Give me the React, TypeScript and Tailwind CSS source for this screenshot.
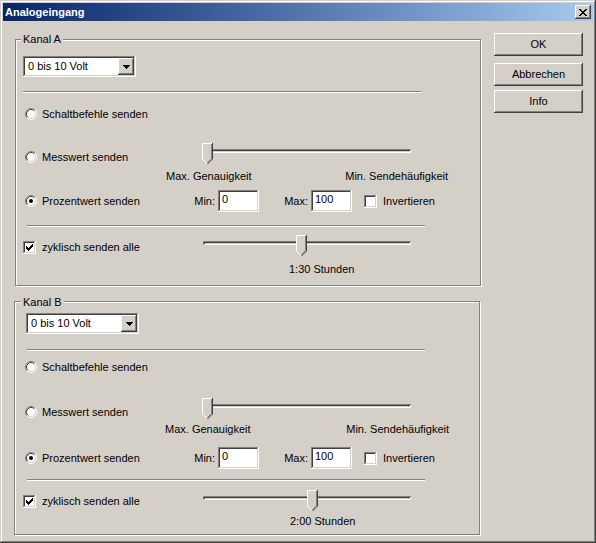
import React from "react";

const raised =
  "shadow-[inset_-1px_-1px_#404040,inset_1px_1px_#fff,inset_-2px_-2px_#808080,inset_2px_2px_#d4d0c8]";
const sunken =
  "shadow-[inset_-1px_-1px_#fff,inset_1px_1px_#808080,inset_-2px_-2px_#d4d0c8,inset_2px_2px_#404040]";

const Radio = ({ checked }: { checked?: boolean }) => (
  <svg width="12" height="12" viewBox="0 0 12 12" className="shrink-0">
    <circle cx="6" cy="6" r="5" fill="#fff" />
    <path d="M9.89 2.11A5.5 5.5 0 0 0 2.11 9.89" fill="none" stroke="#808080" />
    <path d="M2.11 9.89A5.5 5.5 0 0 0 9.89 2.11" fill="none" stroke="#fff" />
    <path d="M9.18 2.82A4.5 4.5 0 0 0 2.82 9.18" fill="none" stroke="#404040" />
    <path d="M2.82 9.18A4.5 4.5 0 0 0 9.18 2.82" fill="none" stroke="#d4d0c8" />
    {checked && <circle cx="6" cy="6" r="2" fill="#000" />}
  </svg>
);

const RadioRow = ({ label, checked }: { label: string; checked?: boolean }) => (
  <div className="flex items-center h-[16px] gap-[5px]">
    <Radio checked={checked} />
    <span>{label}</span>
  </div>
);

const Check = ({ checked }: { checked?: boolean }) => (
  <span className={`flex items-center justify-center w-[13px] h-[13px] bg-white shrink-0 ${sunken}`}>
    {checked && (
      <svg width="7" height="7" viewBox="0 0 7 7" shapeRendering="crispEdges">
        <path
          d="M6 0h1v1H6z M5 1h2v1H5z M0 2h1v1H0z M4 2h3v1H4z M0 3h2v1H0z M3 3h3v1H3z M0 4h5v1H0z M1 5h3v1H1z M2 6h1v1H2z"
          fill="#000"
        />
      </svg>
    )}
  </span>
);

const Separator = ({ className }: { className: string }) => (
  <div className={`w-[398px] h-[2px] border-t border-b border-t-[#808080] border-b-white ${className}`} />
);

const Combo = () => (
  <div className={`flex w-[113px] h-[21px] bg-white p-[2px] ${sunken}`}>
    <div className="flex-1 pl-[3px] flex items-center">0 bis 10 Volt</div>
    <div className={`w-[16px] h-[17px] bg-[#d4d0c8] flex items-center justify-center ${raised}`}>
      <svg width="7" height="4" viewBox="0 0 7 4" shapeRendering="crispEdges">
        <path d="M0 0h7v1H0z M1 1h5v1H1z M2 2h3v1H2z M3 3h1v1H3z" fill="#000" />
      </svg>
    </div>
  </div>
);

const Edit = ({ value }: { value: string }) => (
  <div className={`w-[41px] h-[22px] bg-white pl-[4px] pt-[3px] ${sunken}`}>{value}</div>
);

const Thumb = () => (
  <svg width="11" height="21" viewBox="0 0 11 21">
    <path d="M0 0H11V16L5.5 21L0 16Z" fill="#d4d0c8" />
    <path d="M0.5 16V0.5H10" fill="none" stroke="#fff" />
    <path d="M0.5 16L5 20.5" fill="none" stroke="#fff" />
    <path d="M10.5 0V16L5.5 21" fill="none" stroke="#404040" />
    <path d="M9.5 1V15.6L5.5 19.6" fill="none" stroke="#808080" />
  </svg>
);

const Slider = ({ thumb }: { thumb: string }) => (
  <div className="relative w-[210px] h-[21px]">
    <div className="absolute left-[1px] top-[6px] w-[208px] h-[4px] shadow-[inset_1px_1px_#808080,inset_-1px_-1px_#fff,inset_2px_2px_#404040,inset_-2px_-2px_#d4d0c8]" />
    <div className={`absolute top-0 ${thumb}`}>
      <Thumb />
    </div>
  </div>
);

type ChannelProps = {
  name: string;
  box: string;
  legend: string;
  combo: string;
  sep1: string;
  schalt: string;
  mess: string;
  labels: string;
  prozent: string;
  sep2: string;
  zyklisch: string;
  zyklischLabel: string;
  thumb: string;
  stunden: string;
  time: string;
};

const Channel = (p: ChannelProps) => (
  <div
    className={`relative w-[466px] border border-[#808080] shadow-[inset_1px_1px_#fff,1px_1px_#fff] flex flex-col items-start ${p.box}`}
  >
    <span className={`absolute px-[2px] bg-[#d4d0c8] leading-[13px] ${p.legend}`}>{p.name}</span>

    {/* Eingangsbereich */}
    <div className={p.combo}>
      <Combo />
    </div>
    <Separator className={p.sep1} />

    {/* Sendeart */}
    <div className={p.schalt}>
      <RadioRow label="Schaltbefehle senden" />
    </div>
    <div className={`flex ${p.mess}`}>
      <div className="w-[177px] mt-[6px]">
        <RadioRow label="Messwert senden" />
      </div>
      <Slider thumb="left-[0px]" />
    </div>
    <div className={`h-[14px] flex justify-between leading-[14px] ${p.labels}`}>
      <span>Max. Genauigkeit</span>
      <span>Min. Sendehäufigkeit</span>
    </div>
    <div className={`h-[22px] flex items-center ${p.prozent}`}>
      <div className="w-[169px]">
        <RadioRow label="Prozentwert senden" checked />
      </div>
      <span className="w-[24px] pr-[3px] text-right">Min:</span>
      <Edit value="0" />
      <span className="ml-[21px] w-[31px] pr-[3px] text-right">Max:</span>
      <Edit value="100" />
      <span className="ml-[12px]">
        <Check />
      </span>
      <span className="ml-[6px]">Invertieren</span>
    </div>
    <Separator className={p.sep2} />

    {/* Zyklisch */}
    <div className={`flex ${p.zyklisch}`}>
      <div className={`w-[179px] h-[16px] flex items-center gap-[6px] ${p.zyklischLabel}`}>
        <Check checked />
        <span>zyklisch senden alle</span>
      </div>
      <Slider thumb={p.thumb} />
    </div>
    <div className={`leading-[14px] ${p.stunden}`}>{p.time}</div>
  </div>
);

const Button = ({ label, className }: { label: string; className: string }) => (
  <div className={`w-[89px] h-[23px] flex items-center justify-center bg-[#d4d0c8] ${raised} ${className}`}>
    {label}
  </div>
);

export default function App() {
  return (
    <div className="w-[596px] h-[543px] overflow-hidden bg-[#d4d0c8] p-[3px] shadow-[inset_-1px_-1px_#404040,inset_1px_1px_#d4d0c8,inset_-2px_-2px_#808080,inset_2px_2px_#fff] font-['Liberation_Sans',Arial,sans-serif] text-[11px] leading-[13px] text-black">
      {/* Titelleiste */}
      <div className="h-[18px] flex items-center justify-between pl-[2px] pr-[2px] bg-linear-to-r from-[#0a246a] to-[#a6caf0]">
        <span className="text-white font-bold">Analogeingang</span>
        <div className={`w-[16px] h-[14px] flex items-center justify-center bg-[#d4d0c8] ${raised}`}>
          <svg width="8" height="7" viewBox="0 0 8 7" shapeRendering="crispEdges">
            <path
              d="M0 0h2v1H0z M6 0h2v1H6z M1 1h2v1H1z M5 1h2v1H5z M2 2h4v1H2z M3 3h2v1H3z M2 4h4v1H2z M1 5h2v1H1z M5 5h2v1H5z M0 6h2v1H0z M6 6h2v1H6z"
              fill="#000"
            />
          </svg>
        </div>
      </div>

      <div className="flex">
        <div className="ml-[12px] mt-[18px] flex flex-col items-start">
          <Channel
            name="Kanal A"
            box="h-[247px]"
            legend="left-[5px] top-[-7px]"
            combo="mt-[16px] ml-[7px]"
            sep1="mt-[14px] ml-[7px]"
            schalt="mt-[13px] ml-[9px]"
            mess="mt-[21px] ml-[9px]"
            labels="mt-[4px] ml-[150px] w-[282px]"
            prozent="mt-[7px] ml-[9px]"
            sep2="mt-[13px] ml-[11px]"
            zyklisch="mt-[8px] ml-[7px]"
            zyklischLabel="mt-[4px]"
            thumb="left-[94px]"
            stunden="mt-[6px] ml-[273px]"
            time="1:30 Stunden"
          />
          <div className="mt-[15px] -ml-[1px]">
            <Channel
              name="Kanal B"
              box="h-[234px]"
              legend="left-[6px] top-[-6px]"
              combo="mt-[11px] ml-[11px]"
              sep1="mt-[15px] ml-[12px]"
              schalt="mt-[8px] ml-[10px]"
              mess="mt-[23px] ml-[10px]"
              labels="mt-[2px] ml-[150px] w-[284px]"
              prozent="mt-[11px] ml-[10px]"
              sep2="mt-[10px] ml-[12px]"
              zyklisch="mt-[9px] ml-[8px]"
              zyklischLabel="mt-[3px]"
              thumb="left-[105px]"
              stunden="mt-[3px] ml-[275px]"
              time="2:00 Stunden"
            />
          </div>
        </div>

        <div className="ml-[13px] mt-[12px] flex flex-col">
          <Button label="OK" className="" />
          <Button label="Abbrechen" className="mt-[7px]" />
          <Button label="Info" className="mt-[4px]" />
        </div>
      </div>
    </div>
  );
}
